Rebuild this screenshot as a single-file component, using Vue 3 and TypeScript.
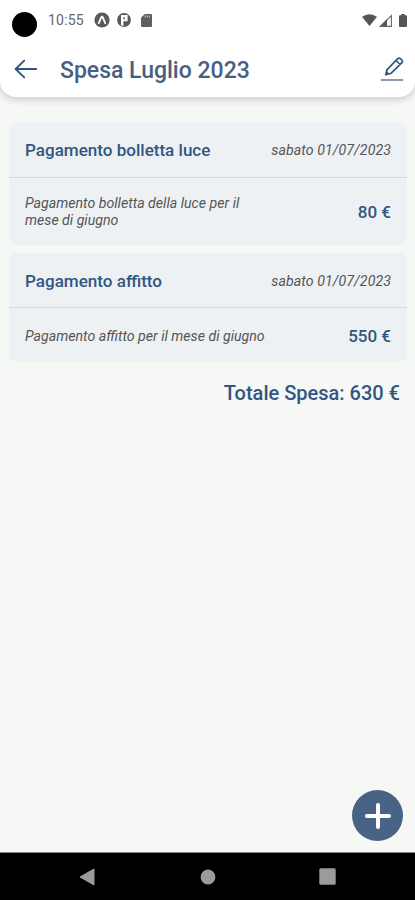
<script setup lang="ts">
import { computed } from 'vue'

interface Expense {
  id: number
  title: string
  date: string
  description: string
  amount: number
}

const expenses: Expense[] = [
  {
    id: 1,
    title: 'Pagamento bolletta luce',
    date: 'sabato 01/07/2023',
    description: 'Pagamento bolletta della luce per il mese di giugno',
    amount: 80,
  },
  {
    id: 2,
    title: 'Pagamento affitto',
    date: 'sabato 01/07/2023',
    description: 'Pagamento affitto per il mese di giugno',
    amount: 550,
  },
]

const total = computed(() => expenses.reduce((sum, e) => sum + e.amount, 0))
</script>

<template>
  <div class="screen">
    <header class="header">
      <div class="status">
        <span class="camera"></span>
        <span class="clock">10:55</span>
        <svg class="st-icon expo" width="16" height="16" viewBox="0 0 16 16">
          <circle cx="8" cy="8" r="7.6" fill="#5a5a5a" />
          <path d="M4.8 11.2 7.2 5.4Q8 4 8.800 5.400L11.200 11.200" fill="none" stroke="#fff" stroke-width="1.800" stroke-linecap="round" />
        </svg>
        <svg class="st-icon pocket" width="14" height="14" viewBox="0 0 14 14">
          <circle cx="7" cy="7" r="6.900" fill="#5a5a5a" />
          <path d="M4 2h6.600v6.200H6.400V13L4 12.300z" fill="#fff" />
          <path d="M6.400 4.200h1.400v2.200H6.400z" fill="#5a5a5a" />
        </svg>
        <svg class="st-icon" width="11" height="13" viewBox="0 0 11 13">
          <path d="M3.800 0H10a1 1 0 0 1 1 1v11a1 1 0 0 1-1 1H1a1 1 0 0 1-1-1V3.800z" fill="#5f5f5f" />
          <path d="M4.200 1.500v2M6.300 1.500v2M8.400 1.500v2" stroke="#ccc" stroke-width="1" />
        </svg>
        <span class="spacer"></span>
        <svg class="st-icon" width="15" height="12" viewBox="0 0 15 12">
          <path d="M0 2.800Q7.500-2.500 15 2.800L7.500 12z" fill="#555" />
        </svg>
        <svg class="st-icon signal" width="13" height="13" viewBox="0 0 13 13">
          <path d="M0 13 8 5v8z" fill="#555" />
          <path d="M1.500 12.400 12.400 1.500v10.900z" fill="none" stroke="#666" stroke-width="1.100" />
        </svg>
        <svg class="st-icon battery" width="8" height="13" viewBox="0 0 8 13">
          <path d="M2.300 0h3.400v1.200H7a1 1 0 0 1 1 1V12a1 1 0 0 1-1 1H1a1 1 0 0 1-1-1V2.200a1 1 0 0 1 1-1h1.300z" fill="#555" />
        </svg>
      </div>
      <div class="appbar">
        <svg class="back" width="24" height="20" viewBox="0 0 24 20" fill="none" stroke="#315681" stroke-width="1.900" stroke-linecap="round" stroke-linejoin="round">
          <path d="M10.200 1.600 1.600 10l8.600 8.400M1.800 10h20.400" />
        </svg>
        <h1 class="title">Spesa Luglio 2023</h1>
        <svg class="edit" width="24" height="26" viewBox="0 0 24 26" fill="none" stroke-linejoin="round">
          <path d="M5.800 18.800l1.100-5L17.700 2.700q1.300-1.200 2.700 0l1.500 1.500q1.100 1.200 0 2.500L11 17.300zM16 4.500l4.200 4" stroke="#315681" stroke-width="1.700" />
          <path d="M5.800 18.800l.8-3.800 3 2.900z" fill="#315681" />
          <path d="M.8 24h22.400" stroke="#8d98ac" stroke-width="2" />
        </svg>
      </div>
    </header>

    <main class="content">
      <article v-for="item in expenses" :key="item.id" class="card">
        <div class="card-head">
          <h2 class="card-title">{{ item.title }}</h2>
          <span class="date">{{ item.date }}</span>
        </div>
        <div class="card-body">
          <p class="desc">{{ item.description }}</p>
          <span class="amount">{{ item.amount }} €</span>
        </div>
      </article>
      <p class="total">Totale Spesa: {{ total }} €</p>
    </main>

    <button class="fab" aria-label="Aggiungi">
      <svg width="28" height="28" viewBox="0 0 28 28" stroke="#fff" stroke-width="4" stroke-linecap="round">
        <path d="M14 3v22M3 14h22" />
      </svg>
    </button>

    <nav class="navbar">
      <svg width="16" height="18" viewBox="0 0 16 18"><path d="M1 9 15 1v16z" fill="#9b9b9b" stroke="#9b9b9b" stroke-linejoin="round" /></svg>
      <svg class="home" width="16" height="16" viewBox="0 0 16 16"><circle cx="8" cy="8" r="7.400" fill="#9b9b9b" /></svg>
      <svg width="17" height="17" viewBox="0 0 17 17"><rect x=".3" y=".3" width="16.400" height="16.400" rx="1.500" fill="#9b9b9b" /></svg>
    </nav>
  </div>
</template>

<style>
body {
  margin: 0;
}
</style>

<style scoped>
.screen {
  position: relative;
  display: flex;
  flex-direction: column;
  width: 415px;
  height: 900px;
  overflow: hidden;
  background: #f5f8f5;
  color: #315681;
  font-family: Roboto, 'Liberation Sans', sans-serif;
}
h1,
h2,
p {
  margin: 0;
}
.header {
  height: 97px;
  box-sizing: border-box;
  background: #fff;
  border-radius: 0 0 16px 16px;
  box-shadow: 0 2px 9px rgba(0, 0, 0, 0.2);
}
.status {
  display: flex;
  align-items: center;
  height: 40px;
  padding: 0 8px 0 12px;
}
.camera {
  width: 25px;
  height: 25px;
  margin-top: 8px;
  border-radius: 50%;
  background: #000;
}
.clock {
  width: 46px;
  margin-left: 11px;
  font-size: 14px;
  line-height: 16px;
  letter-spacing: 0.2px;
  color: #666;
}
.expo {
  margin-right: 7px;
}
.pocket {
  margin-right: 10px;
}
.spacer {
  flex: 1;
}
.signal {
  margin-left: 2px;
}
.battery {
  margin-left: 7px;
}
.appbar {
  display: flex;
  align-items: center;
  height: 57px;
  padding: 0 11px 0 14px;
}
.back {
  margin-top: 1px;
}
.title {
  flex: 1;
  margin: 4px 0 0 22px;
  font-size: 23px;
  line-height: 28px;
  font-weight: 500;
  color: #476080;
}
.content {
  flex: 1;
  display: flex;
  flex-direction: column;
  gap: 8px;
  padding: 25px 8px 0 9px;
}
.card {
  border-radius: 8px;
  background: #edf1f4;
}
.card-head {
  display: flex;
  align-items: center;
  justify-content: space-between;
  height: 54px;
  padding: 1px 16px 0;
  border-bottom: 1px solid #d0d7df;
}
.card:nth-child(2) .card-head {
  height: 52px;
  padding-top: 2px;
}
.card-title {
  font-size: 17.06px;
  line-height: 20px;
  font-weight: 500;
}
.date,
.desc {
  font-size: 14.15px;
  line-height: 17px;
  font-style: italic;
  color: #555;
}
.date {
  letter-spacing: 0.08px;
}
.card-body {
  display: flex;
  align-items: center;
  justify-content: space-between;
  padding: 17px 16px 16px;
}
.card:nth-child(2) .card-body {
  padding: 18px 16px 15px;
}
.desc {
  width: 245px;
}
.amount {
  font-size: 17px;
  line-height: 21px;
  font-weight: 500;
}
.total {
  padding: 11px 7px 0 0;
  text-align: right;
  font-size: 20px;
  line-height: 24px;
  font-weight: 500;
}
.fab {
  position: absolute;
  right: 12px;
  bottom: 59px;
  display: flex;
  align-items: center;
  justify-content: center;
  width: 51px;
  height: 51px;
  padding: 0;
  border: 0;
  border-radius: 50%;
  background: #476487;
}
.navbar {
  display: flex;
  align-items: center;
  justify-content: space-between;
  height: 47px;
  padding: 0 79px;
  border-top: 1px solid #858585;
  background: #000;
}
.home {
  margin-left: 1px;
}
</style>
